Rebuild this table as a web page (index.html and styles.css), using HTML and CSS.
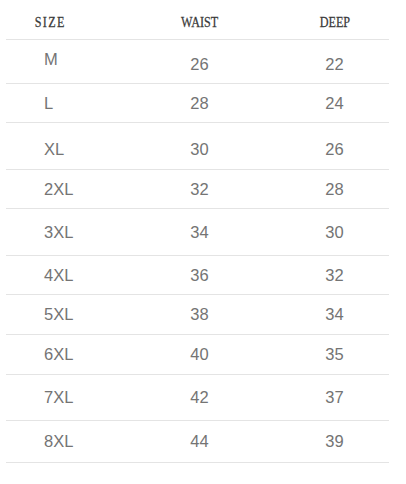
FILE: index.html
```html
<!DOCTYPE html>
<html>
<head>
<meta charset="utf-8">
<link rel="stylesheet" href="styles.css">
</head>
<body>
<div class="table">
  <div class="row head">
    <div class="cell c1"><span class="h wide">SIZE</span></div>
    <div class="cell c2"><span class="h">WAIST</span></div>
    <div class="cell c3"><span class="h">DEEP</span></div>
  </div>
  <div class="row r1">
    <div class="cell c1 size">M</div>
    <div class="cell c2">26</div>
    <div class="cell c3">22</div>
  </div>
  <div class="row r2">
    <div class="cell c1 size">L</div>
    <div class="cell c2">28</div>
    <div class="cell c3">24</div>
  </div>
  <div class="row r3">
    <div class="cell c1 size">XL</div>
    <div class="cell c2">30</div>
    <div class="cell c3">26</div>
  </div>
  <div class="row r4">
    <div class="cell c1 size">2XL</div>
    <div class="cell c2">32</div>
    <div class="cell c3">28</div>
  </div>
  <div class="row r5">
    <div class="cell c1 size">3XL</div>
    <div class="cell c2">34</div>
    <div class="cell c3">30</div>
  </div>
  <div class="row r6">
    <div class="cell c1 size">4XL</div>
    <div class="cell c2">36</div>
    <div class="cell c3">32</div>
  </div>
  <div class="row r7">
    <div class="cell c1 size">5XL</div>
    <div class="cell c2">38</div>
    <div class="cell c3">34</div>
  </div>
  <div class="row r8">
    <div class="cell c1 size">6XL</div>
    <div class="cell c2">40</div>
    <div class="cell c3">35</div>
  </div>
  <div class="row r9">
    <div class="cell c1 size">7XL</div>
    <div class="cell c2">42</div>
    <div class="cell c3">37</div>
  </div>
  <div class="row r10">
    <div class="cell c1 size">8XL</div>
    <div class="cell c2">44</div>
    <div class="cell c3">39</div>
  </div>
</div>
</body>
</html>
```
FILE: styles.css
```css
html, body {
  margin: 0;
  padding: 0;
  background: #ffffff;
}
.table {
  margin-left: 6px;
  width: 383px;
}
.row {
  display: grid;
  grid-template-columns: 88px 211px 59px 1fr;
  align-items: center;
  border-bottom: 1px solid #e4e4e4;
  font-family: "Liberation Sans", Arial, sans-serif;
  font-size: 16.5px;
  color: #747474;
  line-height: 19px;
}
.cell {
  text-align: center;
  white-space: nowrap;
}
.cell.size {
  text-align: left;
  padding-left: 38px;
}
.head {
  padding-top: 6px;
  box-sizing: border-box;
  height: 40px;
  font-family: "Liberation Serif", "Times New Roman", serif;
  font-size: 13.5px;
  color: #3a3a3a;
}
.head .h {
  display: inline-block;
  transform: scale(0.9, 1.08);
  -webkit-text-stroke: 0.25px #3a3a3a;
}
.head .h.wide {
  letter-spacing: 1.5px;
}
.r1 { height: 43px; }
.r1 .size { padding-bottom: 4px; }
.r1 .c2, .r1 .c3 { padding-top: 6px; }
.r2 { height: 38px; }
.r3 { padding-top: 6px; box-sizing: border-box; height: 47px; }
.r4 { height: 38px; }
.r5 { height: 46px; }
.r6 { height: 38px; }
.r7 { height: 39px; }
.r8 { height: 39px; }
.r9 { height: 45px; }
.r10 { height: 41px; }
```
